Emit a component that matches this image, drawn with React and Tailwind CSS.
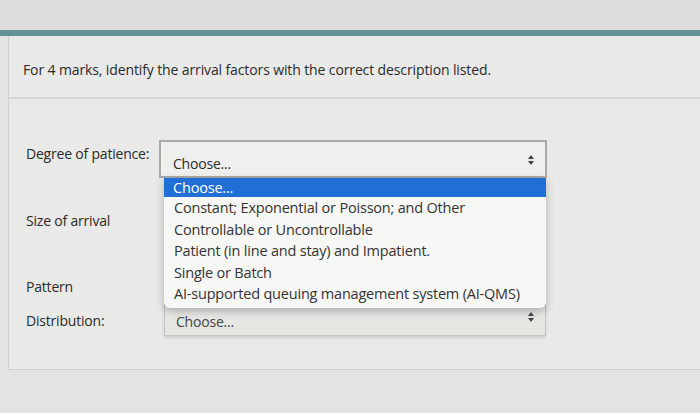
import { useState } from 'react'

const options = [
  'Choose...',
  'Constant; Exponential or Poisson; and Other',
  'Controllable or Uncontrollable',
  'Patient (in line and stay) and Impatient.',
  'Single or Batch',
  'AI-supported queuing management system (AI-QMS)',
]

function Chevrons({ className }) {
  return (
    <svg width="8" height="12" viewBox="0 0 8 12" className={className}>
      <path d="M4 1 L7 5 H1 Z" fill="#444" />
      <path d="M4 11 L7 7 H1 Z" fill="#444" />
    </svg>
  )
}

export default function App() {
  const [selected, setSelected] = useState(0)

  return (
    <div className="w-[700px] h-[413px] overflow-hidden bg-[#e3e3e1] text-[#2b2b2b] font-['Open_Sans',sans-serif]">
      {/* top band */}
      <div className="h-[30px] bg-[#dcdcda]" />
      <div className="h-[6px] bg-[#5f9197]" />

      {/* card */}
      <div className="ml-[8px] h-[334px] bg-[#e9e9e7] border-l border-b border-[#cfcfcd]">
        <div className="h-[63px] border-b-2 border-[#d6d6d4] pl-[14px] pt-[23px] text-[14px] tracking-[-0.12px]">
          For 4 marks, identify the arrival factors with the correct description listed.
        </div>

        <div className="pt-[41px] pl-[17px] text-[14px] tracking-[-0.2px]">
          {/* row 1 */}
          <div className="relative flex items-start">
            <div className="w-[133px] pt-[3px]">Degree of patience:</div>
            <div className="w-[388px] h-[38px] flex items-center justify-between bg-[#efefed] border-2 border-[#a9a9a7] pl-[12px] pr-[10px] pt-[8px]">
              <span>Choose...</span>
              <Chevrons className="mb-[6px]" />
            </div>

            {/* open dropdown list */}
            <div className="absolute left-[138px] top-[38px] w-[382px] z-10 bg-[#f7f7f6] rounded-b-[6px] shadow-[0_3px_8px_rgba(0,0,0,0.25)] pb-[3px] text-[14.5px]">
              {options.map((o, i) => (
                <div
                  key={i}
                  onMouseEnter={() => setSelected(i)}
                  className={
                    i === selected
                      ? 'h-[19px] leading-[19px] pl-[9px] bg-[#1f6fd6] text-white'
                      : 'h-[21.6px] leading-[21.6px] pl-[10px] text-[#333]'
                  }
                >
                  {o}
                </div>
              ))}
            </div>
          </div>

          {/* row 2 */}
          <div className="flex items-center h-[32px] mt-[26px]">
            <div className="w-[133px]">Size of arrival</div>
          </div>

          {/* row 3 */}
          <div className="flex items-center h-[32px] mt-[34px]">
            <div className="w-[133px]">Pattern</div>
          </div>

          {/* row 4 */}
          <div className="flex items-center mt-[2px]">
            <div className="w-[138px] pt-[1px]">Distribution:</div>
            <div className="w-[382px] h-[32px] flex items-center justify-between bg-[#e6e6e3] border border-[#c4c4c2] shadow-[0_2px_3px_rgba(0,0,0,0.12)] pl-[11px] pr-[10px]">
              <span className="pt-[3px] text-[#444]">Choose...</span>
              <Chevrons className="mb-[6px]" />
            </div>
          </div>
        </div>
      </div>
    </div>
  )
}
